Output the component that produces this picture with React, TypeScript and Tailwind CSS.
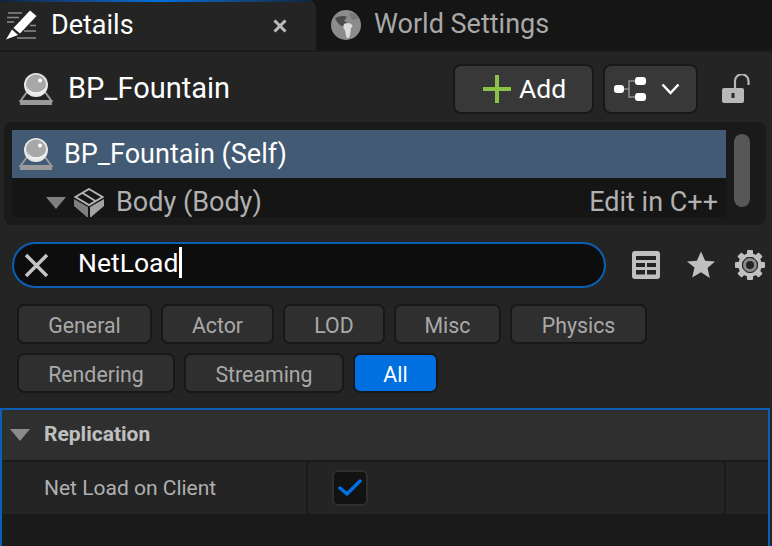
import { ReactNode } from 'react'

function ActorIcon({ className = '' }: { className?: string }) {
  return (
    <svg className={className} width="34" height="34" viewBox="0 0 34 34">
      <path d="M8 20 1.500 29h31L26 20" fill="none" stroke="#9a9a9a" strokeWidth="2" />
      <rect x="1" y="28.500" width="32" height="4.500" fill="#9a9a9a" />
      <circle cx="17" cy="13" r="12" fill="#e8e8e8" />
      <circle cx="17" cy="12.500" r="10" fill="#a8a8a8" />
      <path d="M8 14c1 6 5 9 9 9 5 0 9-3 10-9-2 4-5 6-10 6s-7-2-9-6z" fill="#f0f0f0" />
      <circle cx="21" cy="8.500" r="2" fill="#ffffff" />
    </svg>
  )
}

function DetailsIcon() {
  return (
    <svg width="32" height="32" viewBox="0 0 32 32">
      <path d="M2 3h14M1 7.500h12M1 12h7" stroke="#8a8a8a" strokeWidth="1.500" fill="none" />
      <path d="M24 15.500h6M18 21h12M11 28h19" stroke="#8a8a8a" strokeWidth="1.500" fill="none" />
      <path d="M24 .500 30.500 6 14 23.500 7.500 18z" fill="#ffffff" />
      <path d="M6 19.500 12 25 0 29.500z" fill="#ffffff" />
    </svg>
  )
}

function GlobeIcon() {
  return (
    <svg width="30" height="30" viewBox="0 0 30 30">
      <circle cx="15" cy="15" r="15" fill="#8c8c8c" />
      <path d="M4 8c4-2 9-3 12-1l-3 4 4 2-3 3c-4 1-7-2-10-8z" fill="#4b4b4b" />
      <path d="M13 14c3-2 7-1 8 1 1 1 0 2-1 3l-1 8c-2 3-3 3-4 0l-1-6c-2-1-2-4-1-6z" fill="#dcdcdc" />
      <path d="M18 3c4 0 8 2 10 5l-6 2c-2-2-3-4-4-7z" fill="#777777" />
    </svg>
  )
}

function CubeIcon() {
  return (
    <svg width="32" height="30" viewBox="0 0 32 30">
      <path d="M1 18v-7l14 8v11z" fill="#7f7f7f" />
      <path d="M31 18v-7l-14 8v11z" fill="#a3a3a3" />
      <path d="M16 1 29.500 9 16 17 2.500 9z" fill="none" stroke="#b4b4b4" strokeWidth="2" />
      <path d="M9.500 5 22.500 13" stroke="#b4b4b4" strokeWidth="2" />
    </svg>
  )
}

function TreeIcon() {
  return (
    <svg width="32" height="24" viewBox="0 0 32 24">
      <path d="M10 12h5M15 12V4h6M15 12v8h6" stroke="#8f8f8f" strokeWidth="1.500" fill="none" />
      <rect x="0" y="8" width="10" height="8" rx="3" fill="#ffffff" />
      <rect x="21" y="0" width="11" height="8" rx="3" fill="#ffffff" />
      <rect x="21" y="16" width="11" height="8" rx="3" fill="#ffffff" />
    </svg>
  )
}

function LockIcon() {
  return (
    <svg width="28" height="30" viewBox="0 0 28 30">
      <path d="M13 14V7a6.500 6.500 0 0 1 13.500 0v4" fill="none" stroke="#b8b8b8" strokeWidth="2.200" />
      <rect x="0" y="14" width="22" height="15" rx="2" fill="#b8b8b8" />
      <rect x="9.500" y="19" width="3" height="5" fill="#2a2a2a" />
    </svg>
  )
}

function TableIcon() {
  return (
    <svg width="28" height="28" viewBox="0 0 28 28">
      <rect width="28" height="28" rx="3" fill="#c0c0c0" />
      <rect x="4" y="5" width="20" height="4" fill="#242424" />
      <rect x="4" y="12" width="9" height="4" fill="#242424" />
      <rect x="15" y="12" width="9" height="4" fill="#242424" />
      <rect x="4" y="19" width="9" height="4.500" fill="#242424" />
      <rect x="15" y="19" width="9" height="4.500" fill="#242424" />
    </svg>
  )
}

function StarIcon() {
  return (
    <svg width="28" height="28" viewBox="0 0 28 28">
      <path d="M14 .500l4.100 9.200 9.900.9-7.500 6.500 2.300 9.900L14 21.300 5.200 26.500l2.300-9.900L0 10.600l9.900-.9z" fill="#c0c0c0" />
    </svg>
  )
}

function GearIcon() {
  const teeth = [0, 45, 90, 135, 180, 225, 270, 315]
  return (
    <svg width="30" height="30" viewBox="0 0 30 30">
      {teeth.map(a => (
        <rect key={a} x="12" y="0" width="6" height="7" rx="1" fill="#c0c0c0" transform={`rotate(${a} 15 15)`} />
      ))}
      <circle cx="15" cy="15" r="10" fill="none" stroke="#c0c0c0" strokeWidth="3.500" />
      <circle cx="15" cy="15" r="5.500" fill="none" stroke="#8a8a8a" strokeWidth="3" />
    </svg>
  )
}

function Filter({ w, active, children }: { w: string; active?: boolean; children: ReactNode }) {
  return (
    <div
      className={`${w} h-[40px] flex items-center justify-center pt-[3px] rounded-[7px] border-2 border-[#181818] text-[21.3px] ${
        active ? 'bg-[#0070e0] text-white' : 'bg-[#2f2f2f] text-[#a9a9a9]'
      }`}
    >
      {children}
    </div>
  )
}

export default function App() {
  return (
    <div className="w-[772px] h-[546px] overflow-hidden flex flex-col bg-[#242424] font-[family-name:Roboto,sans-serif]">
      {/* tabs */}
      <div className="h-[52px] shrink-0 flex bg-[#151515] border-b-2 border-[#1a1a1a]">
        <div className="w-[316px] flex flex-col bg-[#242424] rounded-tr-[8px] overflow-hidden">
          <div className="h-[2px] bg-gradient-to-r from-[#10243a] via-[#0070e0] to-[#10243a]" />
          <div className="flex-1 flex items-center pl-[6px] pr-[29px]">
            <DetailsIcon />
            <span className="ml-[13px] pb-[2px] text-[27px] text-white">Details</span>
            <svg className="ml-auto" width="14" height="14" viewBox="0 0 14 14">
              <path d="M1.500 1.500l11 11M12.500 1.500l-11 11" stroke="#bdbdbd" strokeWidth="3" />
            </svg>
          </div>
        </div>
        <div className="flex-1 flex items-center pl-[15px]">
          <GlobeIcon />
          <span className="ml-[13px] pb-[2px] text-[27px] text-[#a8a8a8]">World Settings</span>
        </div>
      </div>

      {/* actor header */}
      <div className="h-[70px] shrink-0 flex items-center pl-[19px] pt-[4px]">
        <ActorIcon />
        <span className="ml-[15px] text-[29px] text-white">BP_Fountain</span>
        <div className="ml-auto w-[141px] h-[50px] flex items-center pl-[28px] rounded-[8px] border-2 border-[#181818] bg-[#383838]">
          <svg width="28" height="28" viewBox="0 0 28 28">
            <path d="M14 0v28M0 14h28" stroke="#8bc34a" strokeWidth="4" strokeLinecap="round" />
          </svg>
          <span className="ml-[8px] text-[26.5px] text-white">Add</span>
        </div>
        <div className="ml-[9px] w-[95px] h-[50px] flex items-center pl-[9px] rounded-[8px] border-2 border-[#181818] bg-[#383838]">
          <TreeIcon />
          <svg className="ml-[15px]" width="19" height="12" viewBox="0 0 19 12">
            <path d="M1.500 1.500 9.500 10l8-8.500" fill="none" stroke="#ffffff" strokeWidth="2.500" />
          </svg>
        </div>
        <div className="ml-[24px] mr-[22px]">
          <LockIcon />
        </div>
      </div>

      {/* component tree */}
      <div className="h-[103px] shrink-0 mx-[4px] w-[762px] flex rounded-[8px] bg-[#1a1a1a] pt-[8px] pl-[8px]">
        <div className="w-[714px] flex flex-col">
          <div className="h-[48px] flex items-center pl-[7px] bg-[#425a73]">
            <ActorIcon />
            <span className="ml-[11px] text-[27px] text-white">BP_Fountain (Self)</span>
          </div>
          <div className="h-[39px] flex items-center pl-[34px] pr-[8px] pt-[10px] overflow-hidden bg-[#151515]">
            <svg width="20" height="12" viewBox="0 0 20 12">
              <path d="M0 0h20L10 12z" fill="#808080" />
            </svg>
            <span className="ml-[7px]"><CubeIcon /></span>
            <span className="ml-[11px] text-[27px] text-[#b0b0b0]">Body (Body)</span>
            <span className="ml-auto text-[27px] text-[#b0b0b0]">Edit in C++</span>
          </div>
        </div>
        <div className="ml-[8px] mt-[4px] w-[16px] h-[73px] rounded-full bg-[#575757]" />
      </div>

      {/* search */}
      <div className="h-[46px] shrink-0 mt-[17px] flex items-center pl-[12px]">
        <div className="w-[594px] h-[46px] flex items-center pl-[10px] rounded-full border-2 border-[#0b5fb4] bg-[#0d0d0d]">
          <svg width="25" height="25" viewBox="0 0 25 25">
            <path d="M2 2l21 21M23 2 2 23" stroke="#c4c4c4" strokeWidth="3.500" />
          </svg>
          <span className="ml-[29px] pb-[4px] text-[26.5px] text-white">NetLoad</span>
          <span className="ml-[1px] mb-[5px] w-[3px] h-[31px] bg-white" />
        </div>
        <div className="ml-[26px]"><TableIcon /></div>
        <div className="ml-[27px]"><StarIcon /></div>
        <div className="ml-[20px]"><GearIcon /></div>
      </div>

      {/* filters */}
      <div className="mt-[16px] shrink-0 flex flex-col gap-[9px] pl-[17px]">
        <div className="flex gap-[9px]">
          <Filter w="w-[135px]">General</Filter>
          <Filter w="w-[113px]">Actor</Filter>
          <Filter w="w-[102px]">LOD</Filter>
          <Filter w="w-[107px]">Misc</Filter>
          <Filter w="w-[137px]">Physics</Filter>
        </div>
        <div className="flex gap-[9px]">
          <Filter w="w-[158px]">Rendering</Filter>
          <Filter w="w-[160px]">Streaming</Filter>
          <Filter w="w-[85px]" active>All</Filter>
        </div>
      </div>

      {/* results */}
      <div className="mt-[15px] w-[770px] flex-1 flex flex-col border-2 border-b-0 border-[#0b5fb4] bg-[#1a1a1a]">
        <div className="h-[52px] shrink-0 flex items-center pl-[8px] bg-[#2f2f2f] border-b-2 border-[#1a1a1a]">
          <svg width="20" height="12" viewBox="0 0 20 12">
            <path d="M0 0h20L10 12z" fill="#8a8a8a" />
          </svg>
          <span className="ml-[14px] text-[21px] font-bold text-[#c0c0c0]">Replication</span>
        </div>
        <div className="h-[52px] shrink-0 flex bg-[#242424]">
          <div className="w-[306px] flex items-center pl-[42px] pt-[2px] border-r-2 border-[#1a1a1a] text-[21px] text-[#b0b0b0]">
            Net Load on Client
          </div>
          <div className="flex-1 flex items-center pl-[24px] border-r-2 border-[#1a1a1a]">
            <div className="w-[36px] h-[36px] flex items-center justify-center rounded-[6px] border-2 border-[#2f2f2f] bg-[#121212]">
              <svg width="24" height="18" viewBox="0 0 24 18">
                <path d="M2 9l7 6L22 2" fill="none" stroke="#0070e0" strokeWidth="3.500" strokeLinecap="round" strokeLinejoin="round" />
              </svg>
            </div>
          </div>
          <div className="w-[42px]" />
        </div>
      </div>
    </div>
  )
}
